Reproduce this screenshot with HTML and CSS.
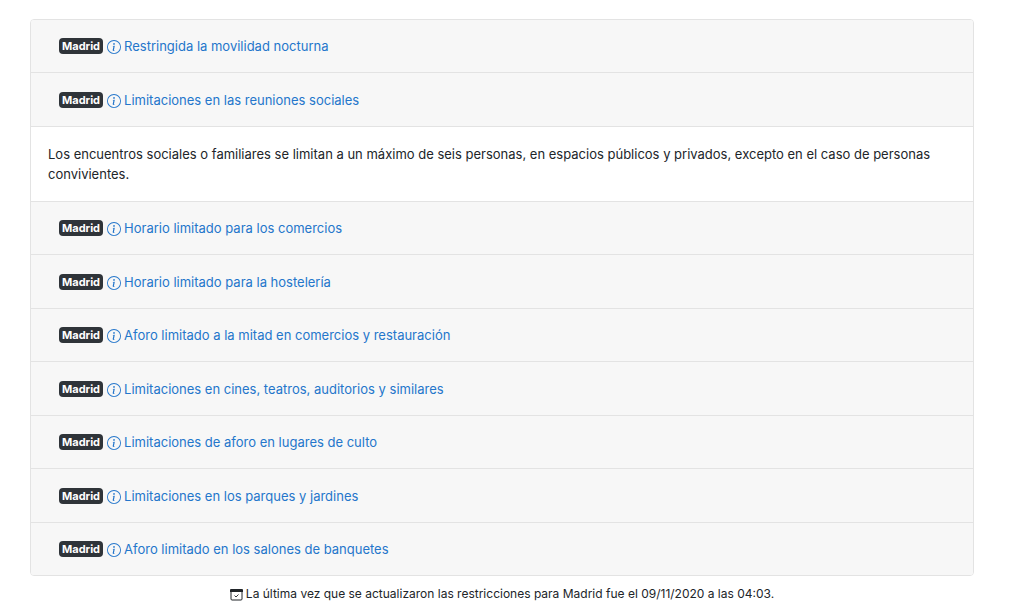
FILE: index.html
```
<!DOCTYPE html>
<html lang="es">
<head>
<meta charset="utf-8">
<meta name="viewport" content="width=device-width, initial-scale=1">
<title>Restricciones en Madrid</title>
<link rel="stylesheet" href="styles.css">
</head>
<body>
<svg class="sprite" aria-hidden="true">
  <symbol id="info" viewBox="0 0 16 16">
    <path fill-rule="evenodd" d="M8 15A7 7 0 1 0 8 1a7 7 0 0 0 0 14zm0 1A8 8 0 1 0 8 0a8 8 0 0 0 0 16z"/>
    <path d="M8.93 6.588l-2.29.287-.082.38.45.083c.294.07.352.176.288.469l-.738 3.468c-.194.897.105 1.319.808 1.319.545 0 1.178-.252 1.465-.598l.088-.416c-.2.176-.492.246-.686.246-.275 0-.375-.193-.304-.533L8.93 6.588z"/>
    <circle cx="8" cy="4.5" r="1"/>
  </symbol>
</svg>
<main class="page">
  <div class="accordion">
    <div class="item"><h2 class="head"><span class="badge">Madrid</span><svg class="icon" aria-hidden="true"><use href="#info"/></svg><button class="toggle" type="button">Restringida la movilidad nocturna</button></h2></div>
    <div class="item"><h2 class="head"><span class="badge">Madrid</span><svg class="icon" aria-hidden="true"><use href="#info"/></svg><button class="toggle" type="button" aria-expanded="true">Limitaciones en las reuniones sociales</button></h2>
      <p class="body">Los encuentros sociales o familiares se limitan a un máximo de seis personas, en espacios públicos y privados, excepto en el caso de personas convivientes.</p></div>
    <div class="item"><h2 class="head"><span class="badge">Madrid</span><svg class="icon" aria-hidden="true"><use href="#info"/></svg><button class="toggle" type="button">Horario limitado para los comercios</button></h2></div>
    <div class="item"><h2 class="head"><span class="badge">Madrid</span><svg class="icon" aria-hidden="true"><use href="#info"/></svg><button class="toggle" type="button">Horario limitado para la hostelería</button></h2></div>
    <div class="item"><h2 class="head"><span class="badge">Madrid</span><svg class="icon" aria-hidden="true"><use href="#info"/></svg><button class="toggle" type="button">Aforo limitado a la mitad en comercios y restauración</button></h2></div>
    <div class="item"><h2 class="head"><span class="badge">Madrid</span><svg class="icon" aria-hidden="true"><use href="#info"/></svg><button class="toggle" type="button">Limitaciones en cines, teatros, auditorios y similares</button></h2></div>
    <div class="item"><h2 class="head"><span class="badge">Madrid</span><svg class="icon" aria-hidden="true"><use href="#info"/></svg><button class="toggle" type="button">Limitaciones de aforo en lugares de culto</button></h2></div>
    <div class="item"><h2 class="head"><span class="badge">Madrid</span><svg class="icon" aria-hidden="true"><use href="#info"/></svg><button class="toggle" type="button">Limitaciones en los parques y jardines</button></h2></div>
    <div class="item"><h2 class="head"><span class="badge">Madrid</span><svg class="icon" aria-hidden="true"><use href="#info"/></svg><button class="toggle" type="button">Aforo limitado en los salones de banquetes</button></h2></div>
  </div>
  <p class="updated"><svg class="calendar" viewBox="0 0 13 13" aria-hidden="true"><rect x="1" y="2" width="11" height="10" rx="1" fill="none" stroke="currentColor"/><path d="M1 1h11q1 0 1 1v2H0V2q0-1 1-1z"/><path d="M4.500 7.500l1.500 1.500 2.500-2.500" fill="none" stroke="currentColor" stroke-width=".9"/></svg>La última vez que se actualizaron las restricciones para Madrid fue el 09/11/2020 a las 04:03.</p>
</main>
</body>
</html>
```
FILE: styles.css
```
*, *::before, *::after { box-sizing: border-box; }
body {
  margin: 0;
  background: #fff;
  color: #212529;
  font: 13px/20px Inter, "Liberation Sans", sans-serif;
}
.sprite { display: none; }
.page { padding: 19px 50px 8px 30px; }
.accordion {
  border: 1px solid #e3e3e3;
  border-radius: 4px;
  overflow: hidden;
}
.item + .item { border-top: 1px solid #e3e3e3; }
.head {
  display: flex;
  align-items: center;
  min-height: 52px;
  margin: 0;
  padding: 11px 28px;
  background: #f7f7f7;
  font: inherit;
}
.item:nth-child(even) .head { min-height: 53px; }
.badge {
  padding: 2px 3px;
  border-radius: 4px;
  background: #2f3439;
  color: #fff;
  font-size: 11px;
  font-weight: 700;
  line-height: 12px;
}
.icon {
  width: 14px;
  height: 14px;
  margin: 2px 3px 0 4px;
  fill: #2476cb;
}
.toggle {
  padding: 5px 0;
  border: 0;
  background: none;
  color: #2476cb;
  font: inherit;
  text-align: left;
  cursor: pointer;
}
.body {
  margin: 0;
  padding: 17px;
  border-top: 1px solid #e3e3e3;
}
.updated {
  display: flex;
  align-items: center;
  justify-content: center;
  gap: 3px;
  margin: 8px 0 0;
  font-size: 12px;
}
.calendar { width: 13px; height: 13px; fill: currentColor; }
```
